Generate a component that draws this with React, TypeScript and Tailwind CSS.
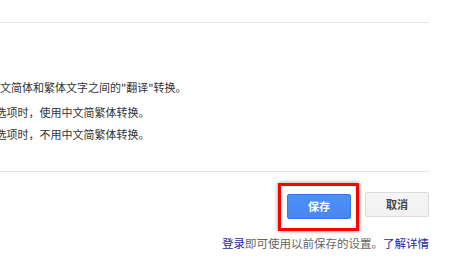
const cjk = { fontFamily: '"Noto Sans CJK SC", "Liberation Sans", sans-serif' };

export default function App() {
  return (
    <div
      className="relative w-[463px] h-[260px] overflow-hidden bg-white text-[#333]"
      style={cjk}
    >
      <div className="w-[429px]">
        {/* top divider */}
        <div className="h-[22px]" />
        <div className="border-t border-[#e5e5e5]" />

        {/* description */}
        <div className="mt-[57px] text-[11px] leading-[14px] whitespace-nowrap">
          <p className="-ml-[33px]">用于中文简体和繁体文字之间的"翻译"转换。</p>
          <p className="-ml-[37.5px] mt-[11px]">选择此选项时，使用中文简繁体转换。</p>
          <p className="-ml-[37.5px] mt-[8px]">不选此选项时，不用中文简繁体转换。</p>
        </div>

        {/* bottom divider */}
        <div className="mt-[30px] border-t border-[#e5e5e5]" />

        {/* actions */}
        <div className="mt-[20px] flex justify-end gap-[14px]">
          <span className="relative">
            <button className="w-[64px] h-[25px] rounded-[2px] border border-[#3079ed] bg-gradient-to-b from-[#4d90fe] to-[#4787ed] text-white text-[11px] font-bold">
              保存
            </button>
            <span className="pointer-events-none absolute -left-[9px] -top-[9px] -right-[8px] -bottom-[12px] border-[3px] border-[#f00] shadow-[0_0_4px_rgba(0,0,0,0.45)]" />
          </span>
          <button className="w-[64px] h-[25px] rounded-[2px] border border-[#dcdcdc] bg-gradient-to-b from-[#f5f5f5] to-[#f1f1f1] text-[#444] text-[11px] font-bold">
            取消
          </button>
        </div>

        <p className="mt-[17px] text-right text-[11.5px] leading-[14px] text-[#666] whitespace-nowrap">
          <a className="text-[#2a1ea8]">登录</a>即可使用以前保存的设置。
          <a className="text-[#2a1ea8]">了解详情</a>
        </p>
      </div>
    </div>
  );
}
